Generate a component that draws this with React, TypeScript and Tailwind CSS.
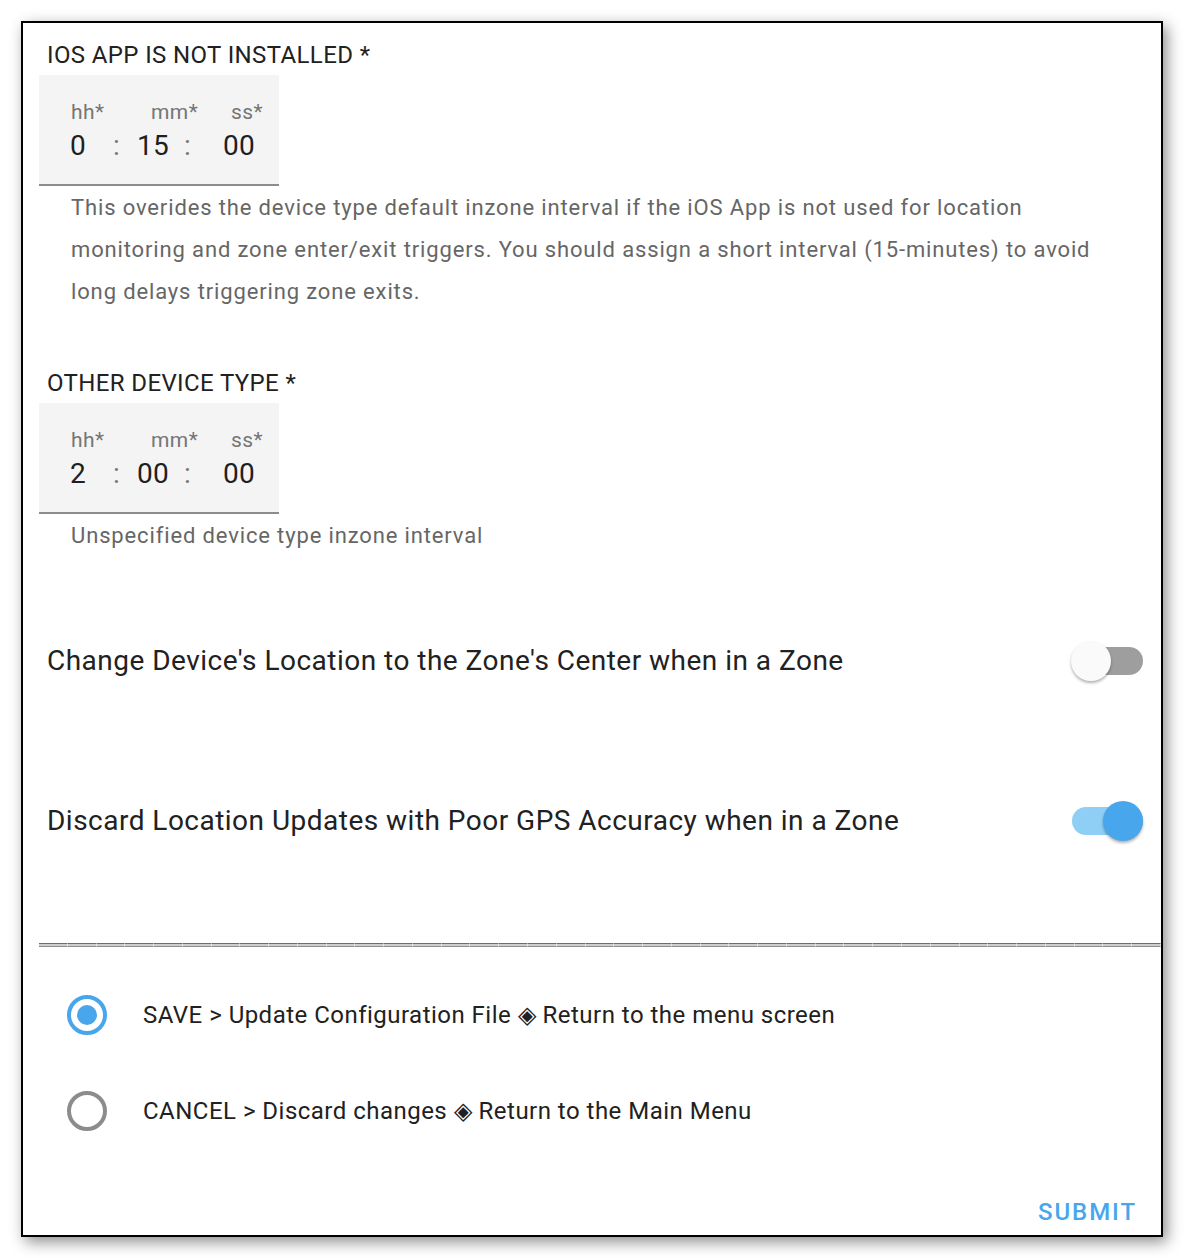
import React from "react";

const font = { fontFamily: "Roboto, 'Noto Sans', sans-serif" };

function TimeBox({ h, m, s }: { h: string; m: string; s: string }) {
  return (
    <div className="ml-[16px] mt-[6px] w-[240px] h-[111px] bg-[#f4f4f4] border-b-2 border-[#8c8c8c] flex flex-col">
      <div className="flex pl-[32px] pt-[24px] text-[21px] leading-[26px] tracking-[0.4px] text-[#757575]">
        <span className="w-[80px]">hh*</span>
        <span className="w-[80px]">mm*</span>
        <span>ss*</span>
      </div>
      <div className="flex pl-[31px] mt-[4px] text-[28px] leading-[34px] tracking-[0.3px] text-[#1f1f1f]">
        <span className="w-[43px]">{h}</span>
        <span className="w-[24px] text-[#777]">:</span>
        <span className="w-[47px]">{m}</span>
        <span className="w-[39px] text-[#777]">:</span>
        <span>{s}</span>
      </div>
    </div>
  );
}

function Toggle({ on }: { on: boolean }) {
  return (
    <div className="relative w-[72px] h-[40px]">
      <div
        className={
          "absolute left-[1px] right-0 top-[6px] h-[28px] rounded-full " +
          (on ? "bg-[#8fcff5]" : "bg-[#9e9e9e]")
        }
      />
      <div
        className={
          "absolute top-0 w-[40px] h-[40px] rounded-full shadow-[0_2px_3px_rgba(0,0,0,0.3)] " +
          (on ? "right-0 bg-[#48a6ed]" : "left-0 bg-[#fafafa]")
        }
      />
    </div>
  );
}

function Radio({ checked, label }: { checked: boolean; label: string }) {
  return (
    <div className="flex items-center h-[60px]">
      <div
        className={
          "ml-[44px] w-[40px] h-[40px] rounded-full border-[4px] flex items-center justify-center " +
          (checked ? "border-[#48a6ed]" : "border-[#8c8c8c]")
        }
      >
        {checked && <div className="w-[20px] h-[20px] rounded-full bg-[#48a6ed]" />}
      </div>
      <span className="ml-[36px] text-[24px] leading-[28px] tracking-[0.48px] text-[#212121]">{label}</span>
    </div>
  );
}

export default function App() {
  const segs = Array.from({ length: 39 });
  return (
    <div className="w-[1184px] h-[1258px] bg-white overflow-hidden" style={font}>
      <div className="ml-[21px] mt-[21px] w-[1142px] h-[1216px] border-2 border-black bg-white shadow-[4px_5px_14px_rgba(0,0,0,0.45)] flex flex-col">
        <div className="pl-[24px] mt-[18px] text-[24px] leading-[28px] tracking-[0.38px] text-[#212121]">
          IOS APP IS NOT INSTALLED *
        </div>
        <TimeBox h="0" m="15" s="00" />
        <div className="pl-[48px] mt-[1px] text-[22px] leading-[42px] tracking-[0.86px] text-[#666666] whitespace-nowrap">
          This overides the device type default inzone interval if the iOS App is not used for location
          <br />
          monitoring and zone enter/exit triggers. You should assign a short interval (15-minutes) to avoid
          <br />
          long delays triggering zone exits.
        </div>

        <div className="pl-[24px] mt-[56px] text-[24px] leading-[28px] tracking-[0.38px] text-[#212121]">
          OTHER DEVICE TYPE *
        </div>
        <TimeBox h="2" m="00" s="00" />
        <div className="pl-[48px] mt-[1px] text-[22px] leading-[42px] tracking-[0.86px] text-[#666666]">
          Unspecified device type inzone interval
        </div>

        <div className="mt-[64px] h-[80px] flex items-center justify-between pl-[24px] pr-[18px]">
          <span className="text-[28px] leading-[32px] tracking-[0.48px] text-[#212121]">
            Change Device's Location to the Zone's Center when in a Zone
          </span>
          <Toggle on={false} />
        </div>

        <div className="mt-[80px] h-[80px] flex items-center justify-between pl-[24px] pr-[18px]">
          <span className="text-[28px] leading-[32px] tracking-[0.48px] text-[#212121]">
            Discard Location Updates with Poor GPS Accuracy when in a Zone
          </span>
          <Toggle on={true} />
        </div>

        <div className="mt-[82px] ml-[16px] h-[4px] flex">
          {segs.map((_, i) => (
            <div
              key={i}
              className="w-[28.77px] h-[4px] shrink-0 border-t border-b border-t-[#6e6e6e] border-b-[#8e8e8e] bg-[#cdcdcd] border-r border-r-[#e6e6e6]"
            />
          ))}
        </div>

        <div className="mt-[38px]">
          <Radio checked={true} label="SAVE > Update Configuration File ◈ Return to the menu screen" />
        </div>
        <div className="mt-[36px]">
          <Radio checked={false} label="CANCEL > Discard changes ◈ Return to the Main Menu" />
        </div>

        <div className="mt-[57px] flex justify-end pr-[24px]">
          <span className="text-[24px] leading-[28px] font-medium tracking-[0.08em] text-[#48a6ed]">
            SUBMIT
          </span>
        </div>
      </div>
    </div>
  );
}
